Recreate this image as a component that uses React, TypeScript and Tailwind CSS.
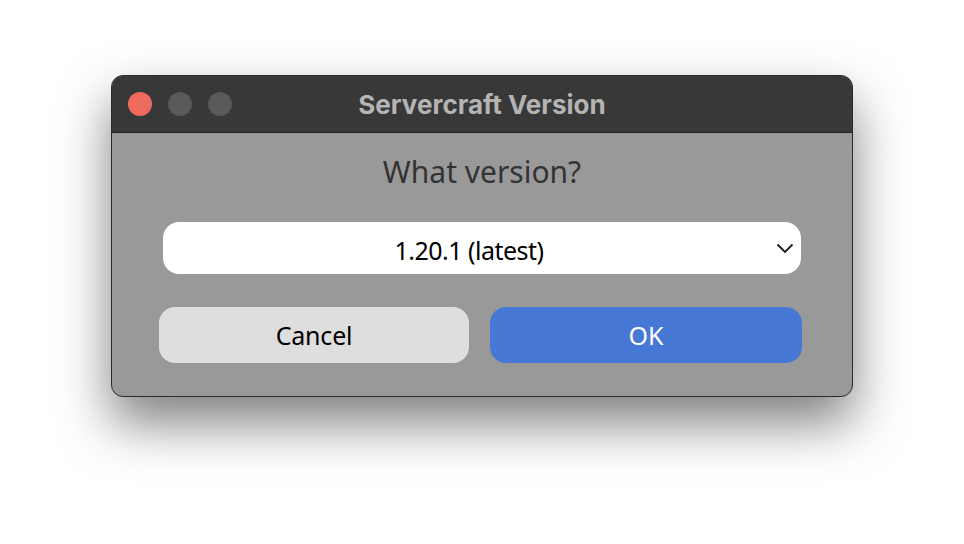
import React from "react";

export default function App() {
  return (
    <div className="w-[964px] h-[544px] bg-white flex justify-center pt-[75px]">
      <div className="w-[742px] h-[322px] rounded-[12px] border border-[#2a2a2a] bg-[#999999] overflow-hidden flex flex-col shadow-[0_26px_52px_rgba(0,0,0,0.5)]">
        <div className="h-[57px] shrink-0 bg-[#383838] border-b border-[#1e1e1e] flex items-center relative">
          <div className="flex items-center gap-[16px] pl-[16px]">
            <div className="w-[24px] h-[24px] rounded-full bg-[#ee6a5f]" />
            <div className="w-[24px] h-[24px] rounded-full bg-[#5a5a5a]" />
            <div className="w-[24px] h-[24px] rounded-full bg-[#5a5a5a]" />
          </div>
          <div className="absolute inset-0 flex items-center justify-center text-[#b4b4b4] font-bold text-[26px]" style={{ fontFamily: "Inter, 'Liberation Sans', sans-serif" }}>
            Servercraft Version
          </div>
        </div>
        <div className="flex-1 flex flex-col" style={{ fontFamily: "'Noto Sans', sans-serif" }}>
          <div className="h-[40px] mt-[18px] flex items-center justify-center text-[30px] text-[#333333]">
            What version?
          </div>
          <div className="mt-[31px] mx-[51px] h-[52px] rounded-[16px] bg-white relative flex items-center justify-center pr-[26px] pt-[6px] text-[25px] tracking-[-0.5px] text-black">
            <span>1.20.1 (latest)</span>
            <svg className="absolute right-[7px] top-[21px]" width="18" height="11" viewBox="0 0 18 11" fill="none">
              <path d="M1.5 1.5 L9 9 L16.5 1.5" stroke="#1a1a1a" strokeWidth="1.8" />
            </svg>
          </div>
          <div className="mt-[33px] ml-[47px] flex gap-[21px]">
            <div className="w-[310px] h-[56px] rounded-[16px] bg-[#dedede] flex items-center justify-center pt-[2px] text-[25px] tracking-[-0.2px] text-black">
              Cancel
            </div>
            <div className="w-[312px] h-[56px] rounded-[16px] bg-[#4778d5] flex items-center justify-center pt-[2px] text-[25px] text-white">
              OK
            </div>
          </div>
        </div>
      </div>
    </div>
  );
}
